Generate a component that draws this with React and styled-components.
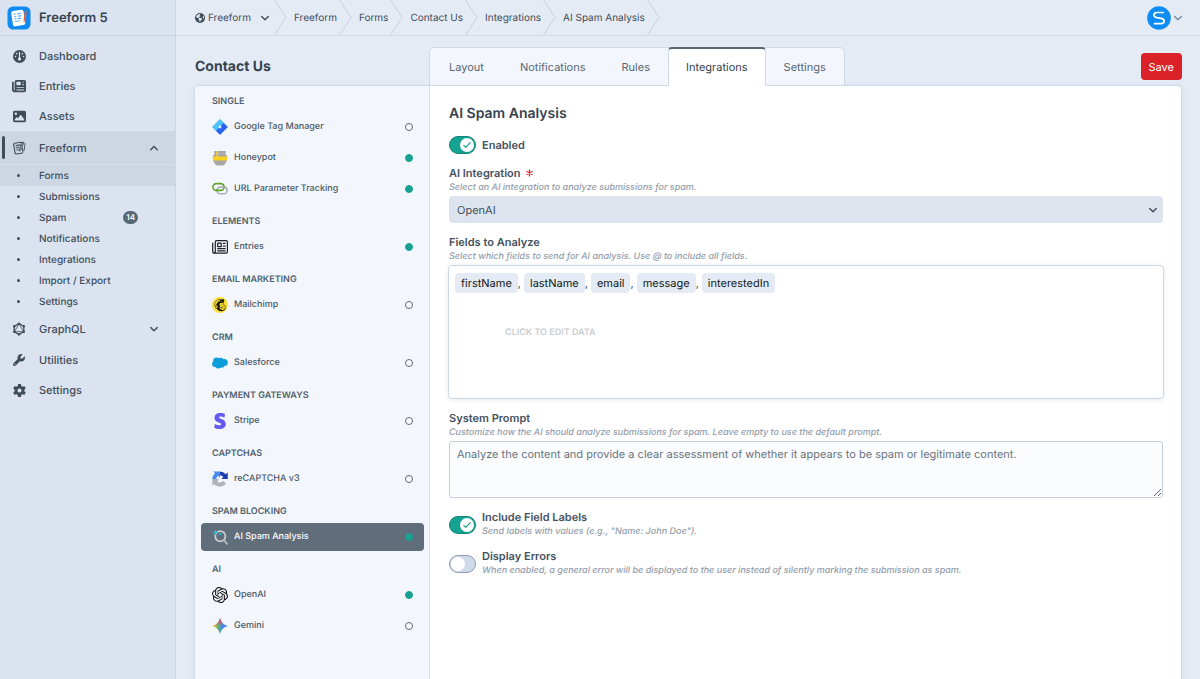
import React from "react";
import styled, { createGlobalStyle, css } from "styled-components";
import { FaGauge, FaNewspaper, FaImage, FaWrench, FaGear, FaEarthAmericas, FaMailchimp } from "react-icons/fa6";
import { SiOpenai, SiStripe } from "react-icons/si";

const GlobalStyle = createGlobalStyle`
  *, *::before, *::after { box-sizing: border-box; }
  body {
    margin: 0;
    background: #e4ebf5;
    color: #3f4d5a;
    font-family: Inter, "Liberation Sans", sans-serif;
    font-size: 11px;
    line-height: 14px;
    text-rendering: geometricPrecision;
  }
  button, input, select, textarea { font: inherit; color: inherit; margin: 0; text-rendering: inherit; }
  a { color: inherit; text-decoration: none; }
  ul, ol { list-style: none; margin: 0; padding: 0; }
  h1, h2, h3, p { margin: 0; }
  svg { display: block; flex: none; }
`;

const Page = styled.div`
  display: flex;
  min-height: 100vh;
`;

/* ---------- global sidebar ---------- */

const Sidebar = styled.aside`
  flex: none;
  width: 176px;
  background: #dae3ef;
  border-right: 1px solid #cbd6e4;
`;

const Brand = styled.a`
  display: flex;
  align-items: center;
  gap: 8px;
  height: 36px;
  padding: 0 7px;
  border-bottom: 1px solid #c9d4e1;
  font-size: 13px;
  font-weight: 600;
  color: #36434f;
`;

const Nav = styled.nav`
  padding-top: 5px;
`;

const NavLink = styled.a`
  position: relative;
  display: flex;
  align-items: center;
  gap: 13px;
  height: ${(p) => (p.$tall ? 33 : 30)}px;
  padding: 0 16px 0 12px;
  font-size: 11px;
  font-weight: 500;
  color: #3f4d5a;
  background: ${(p) => (p.$active ? "#cdd7e3" : "transparent")};
  ${(p) =>
    p.$active &&
    css`
      &::before {
        content: "";
        position: absolute;
        left: 2px;
        top: 5px;
        bottom: 5px;
        width: 3px;
        border-radius: 2px;
        background: #3f4d5a;
      }
    `}
`;

const NavIcon = styled.span`
  display: flex;
  justify-content: center;
  width: 14px;
`;

const NavText = styled.span`
  flex: 1;
`;

const SubNav = styled.ul`
  border-top: 1px solid #d6dfea;
`;

const SubLink = styled.a`
  display: flex;
  align-items: center;
  gap: 13px;
  height: 21px;
  padding: 0 37px 0 12px;
  font-size: 10px;
  font-weight: 500;
  background: ${(p) => (p.$active ? "#cdd7e3" : "transparent")};
  &::before {
    content: "";
    flex: none;
    width: 3px;
    height: 3px;
    margin: 0 6px 0 5px;
    border-radius: 50%;
    background: #3f4d5a;
  }
`;

const Badge = styled.span`
  padding: 0 3px;
  border-radius: 7px;
  background: #596673;
  color: #fff;
  font-size: 8px;
  line-height: 13px;
  font-weight: 600;
`;

/* ---------- top bar ---------- */

const Main = styled.main`
  flex: 1;
  min-width: 0;
  display: flex;
  flex-direction: column;
`;

const TopBar = styled.header`
  display: flex;
  justify-content: space-between;
  height: 36px;
  padding: 0 17px 0 19px;
  border-bottom: 1px solid #d3dce8;
`;

const Crumbs = styled.ol`
  display: flex;
  font-size: 10px;
`;

const Crumb = styled.li`
  display: flex;
  align-items: center;
  gap: 2px;
  & + & { padding-left: 7px; }
`;

const SiteButton = styled.button`
  display: flex;
  align-items: center;
  gap: 3px;
  padding: 0 2px 0 0;
  border: 0;
  background: none;
  svg:last-child { margin-left: 6px; }
`;

const AccountButton = styled.button`
  display: flex;
  align-items: center;
  gap: 2px;
  padding: 0;
  border: 0;
  background: none;
  color: #7d8b9b;
`;

/* ---------- form header ---------- */

const Content = styled.div`
  flex: 1;
  display: flex;
  flex-direction: column;
  padding: 11px 18px 0;
`;

const FormHeader = styled.div`
  display: flex;
  align-items: flex-start;
`;

const FormTitle = styled.h1`
  flex: none;
  width: 235px;
  padding: 2px 0 0 1px;
  font-size: 14px;
  line-height: 36px;
  font-weight: 700;
  color: #36434f;
`;

const Tabs = styled.nav`
  display: flex;
  height: 38px;
  padding-left: 1px;
  border: 1px solid #d0dae6;
  border-bottom: 0;
  border-radius: 5px 5px 0 0;
  background: #f3f7fd;
`;

const Tab = styled.a`
  display: flex;
  align-items: center;
  padding: 0 18px;
  color: #596673;
  ${(p) =>
    p.$active &&
    css`
      margin: -1px 0;
      padding: 0 17px 2px;
      border: 1px solid #d0dae6;
      border-top: 2px solid #596673;
      border-bottom: 0;
      border-radius: 4px 4px 0 0;
      background: #fff;
      color: #36434f;
      z-index: 1;
    `}
`;

const SaveButton = styled.button`
  height: 27px;
  margin: 6px 0 0 auto;
  padding: 0 8px;
  border: 0;
  border-radius: 4px;
  background: #da2127;
  color: #fff;
`;

const Panel = styled.div`
  flex: 1;
  display: flex;
  border: 1px solid #d0dae6;
  border-bottom: 0;
  border-radius: 5px 5px 0 0;
  background: #fff;
  box-shadow: 0 1px 4px rgba(90, 115, 145, 0.12);
`;

/* ---------- integration list ---------- */

const IntegrationList = styled.nav`
  flex: none;
  display: flex;
  flex-direction: column;
  gap: 11px;
  width: 235px;
  padding: 8px 5px 24px 6px;
  border-right: 1px solid #d6dfea;
  border-radius: 5px 0 0 0;
  background: #f3f7fd;
`;

const GroupTitle = styled.h3`
  margin-bottom: 3px;
  padding-left: 11px;
  font-size: 9px;
  line-height: 16px;
  font-weight: 600;
  text-transform: uppercase;
  color: #515f6c;
`;

const GroupItems = styled.ul`
  display: flex;
  flex-direction: column;
  gap: 3px;
`;

const IntegrationLink = styled.a`
  display: flex;
  align-items: center;
  gap: 6px;
  height: 28px;
  padding: 0 11px;
  border-radius: 4px;
  font-size: 9px;
  font-weight: 500;
  color: ${(p) => (p.$active ? "#fff" : "#4b5965")};
  background: ${(p) => (p.$active ? "#606d7b" : "transparent")};
`;

const IntegrationName = styled.span`
  flex: 1;
`;

const Status = styled.span`
  width: 8px;
  height: 8px;
  border-radius: 50%;
  border: 1px solid ${(p) => (p.$on ? "#16a293" : "#5b6875")};
  background: ${(p) => (p.$on ? "#16a293" : "#fff")};
`;

/* ---------- settings form ---------- */

const Form = styled.form`
  flex: 1;
  min-width: 0;
  display: flex;
  flex-direction: column;
  gap: 12px;
  padding: 19px 18px 24px 19px;
`;

const FormHeading = styled.h2`
  margin-bottom: 1px;
  font-size: 14px;
  line-height: 18px;
  font-weight: 600;
  color: #36434f;
`;

const Field = styled.div`
  display: flex;
  flex-direction: column;
`;

const Label = styled.label`
  display: flex;
  align-items: center;
  gap: 5px;
  font-size: 11px;
  line-height: 14px;
  font-weight: 600;
  color: #45525f;
`;

const Hint = styled.p`
  margin-top: 1px;
  font-size: 9px;
  line-height: 14px;
  font-style: italic;
  font-weight: 500;
  color: #929dab;
`;

const SelectWrap = styled.div`
  display: grid;
  align-items: center;
  margin-top: 1px;
  > * { grid-area: 1 / 1; }
  > svg { justify-self: end; margin-right: 5px; pointer-events: none; }
`;

const Select = styled.select`
  appearance: none;
  width: 100%;
  height: 27px;
  padding: 0 8px;
  border: 0;
  border-radius: 4px;
  background: #dee4ed;
`;

const TokenBox = styled.div`
  height: 134px;
  margin: 1px -1px 0;
  padding: 7px 6px;
  border: 1px solid #ccd7e4;
  border-radius: 4px;
  background: #fff;
  box-shadow: 0 1px 5px rgba(90, 115, 145, 0.15);
`;

const Tokens = styled.div`
  display: flex;
  line-height: 20px;
`;

const Token = styled.span`
  padding: 0 6px;
  border-radius: 4px;
  background: #e4ebf5;
  color: #111820;
`;

const Comma = styled.span`
  padding-right: 3px;
`;

const EditButton = styled.button`
  margin: 33px 0 0 50px;
  padding: 0;
  border: 0;
  background: none;
  font-size: 9px;
  font-weight: 600;
  line-height: 14px;
  text-transform: uppercase;
  color: #c9cdd3;
`;

const TextArea = styled.textarea`
  display: block;
  width: 100%;
  height: 57px;
  margin-top: 1px;
  padding: 4px 7px;
  border: 1px solid #c6d0dc;
  border-radius: 3px;
  background: #fbfcfe;
  color: #67737f;
  line-height: 16px;
  resize: vertical;
`;

const ToggleList = styled.div`
  display: flex;
  flex-direction: column;
  gap: 10px;
`;

const ToggleRow = styled.div`
  display: flex;
  align-items: center;
  gap: 6px;
`;

const ToggleWrap = styled.span`
  display: grid;
  align-items: center;
  > * { grid-area: 1 / 1; }
  > svg { justify-self: end; margin-right: 5px; pointer-events: none; }
`;

const ToggleInput = styled.input`
  appearance: none;
  display: flex;
  align-items: center;
  width: 27px;
  height: 18px;
  padding: 0 1px;
  border: 1px solid #8f9fb5;
  border-radius: 9px;
  background: #cfdaea;
  &::before {
    content: "";
    width: 14px;
    height: 14px;
    border-radius: 50%;
    background: #fff;
  }
  &:checked {
    justify-content: flex-end;
    border-color: #128577;
    background: #16a293;
  }
`;

/* ---------- icons ---------- */

const Chevron = ({ up, size = 10 }) => (
  <svg width={size} height={size} viewBox="0 0 10 10" fill="none" stroke="currentColor" strokeWidth="1.4" strokeLinecap="round" strokeLinejoin="round">
    <path d={up ? "M1.7 6.7 5 3.4l3.3 3.3" : "M1.7 3.4 5 6.7l3.3-3.3"} />
  </svg>
);

const CrumbDivider = () => (
  <svg width="13" height="35" viewBox="0 0 13 35" fill="none" stroke="#c5d0de" aria-hidden="true">
    <path d="M.5 0 12 17.5.5 35" />
  </svg>
);

const RequiredMark = () => (
  <svg width="7" height="8" viewBox="0 0 7 8" stroke="#e12d39" strokeWidth="1.3" strokeLinecap="round" role="img" aria-label="Required">
    <path d="M3.5 1v6M.9 2.500l5.200 3M6.100 2.500l-5.200 3" />
  </svg>
);

const FreeformLogo = () => (
  <svg width="24" height="24" viewBox="0 0 24 24">
    <rect width="23" height="23" x=".5" y=".5" rx="5.5" fill="#118af4" />
    <g transform="rotate(-9 12 12)">
      <rect x="5" y="4.2" width="12.5" height="15.5" rx="2.2" fill="#fff" />
      <path d="M7.4 7.6h2M10.8 7.6h4M7.4 10h2M10.8 10h3.6M7.4 12.4h2M10.8 12.4h3.2M7.4 14.8h5" stroke="#5aaef7" strokeWidth="1.1" />
    </g>
    <path d="m18.9 5.2-1.5 9.6" stroke="#e2603f" strokeWidth="2" />
    <path d="m17.3 15-.3 2" stroke="#f5c9a5" strokeWidth="1.4" />
  </svg>
);

const FreeformGlyph = () => (
  <svg width="14" height="14" viewBox="0 0 14 14" fill="none" stroke="currentColor" strokeLinecap="round" strokeLinejoin="round">
    <path d="M10.6 7.5 10.9 11l-1.2 1.3-5.6.7-1-.8L1.6 3.3l.9-1L9 1.3l.8.7" strokeWidth="1.1" />
    <path d="m4 4.6 4.4-.7M4.3 6.8l2.5-.4M4.7 9l1.8-.3" strokeWidth="1.1" />
    <path d="m11.8 1.6-2.5 6.6-1.8 2 .2-2.6 2.2-6z" strokeWidth=".8" fill="currentColor" fillOpacity=".45" />
    <path d="m13 2.5-.9 7" strokeWidth=".9" />
  </svg>
);

const GraphqlIcon = () => (
  <svg width="14" height="14" viewBox="0 0 14 14" fill="none" stroke="currentColor">
    <path d="M7 1.6 11.8 4.3v5.4L7 12.4 2.2 9.7V4.3z" strokeWidth="1.3" />
    <path d="M7 1.8 11.6 9.7H2.4z" strokeWidth=".8" />
    <g fill="currentColor" stroke="none">
      <circle cx="7" cy="1.6" r="1.2" /><circle cx="11.8" cy="4.3" r="1.2" /><circle cx="11.8" cy="9.7" r="1.2" />
      <circle cx="7" cy="12.4" r="1.2" /><circle cx="2.2" cy="9.7" r="1.2" /><circle cx="2.2" cy="4.3" r="1.2" />
    </g>
  </svg>
);

const Avatar = () => (
  <svg width="24" height="24" viewBox="0 0 24 24">
    <circle cx="12" cy="12" r="11.8" fill="#0d8cf5" />
    <path d="M17 6.5H10.2C8 6.5 7 7.5 7 9s1 2.300 3 2.700l4 .7c2.100.4 3.200 1.200 3.200 2.700 0 1.700-1.200 2.600-3.400 2.600H6.800" fill="none" stroke="#fff" strokeWidth="1.7" />
  </svg>
);

const TagManagerIcon = () => (
  <svg width="16" height="16" viewBox="0 0 16 16">
    <path d="M8 .3 15.7 8 8 15.7.3 8z" fill="#2f7df6" />
    <path d="M8 .3 11.8 4.1 4.1 11.8.3 8z" fill="#4fc3f7" />
    <path d="m8 8 3.8-3.9L15.7 8 8 15.7 4.1 11.8z" fill="#2962f0" />
    <path d="m8 6.3 1.7 1.7L8 9.7 6.300 8z" fill="#e8f2fe" />
  </svg>
);

const HoneypotIcon = () => (
  <svg width="16" height="16" viewBox="0 0 16 16">
    <path d="M2.2 1h11.600v2.200H2.200z" fill="#a7a7a7" />
    <path d="M3 3.200h10c1.600 1.400 2.200 2.900 2.200 4.800 0 3.600-1.700 6-4 7.400H4.800c-2.300-1.400-4-3.800-4-7.400 0-1.900.6-3.400 2.200-4.800z" fill="#a7a7a7" />
    <path d="M.9 6.500h14.200c.1.500.1 1 .1 1.600 0 .9-.1 1.700-.3 2.400H1.100C.9 9.800.8 9.100.8 8.100c0-.6 0-1.100.1-1.600z" fill="#f7d21e" />
    <path d="M4.300 1h1.800v6H4.300z" fill="#f7d21e" />
  </svg>
);

const LinkIcon = () => (
  <svg width="16" height="16" viewBox="0 0 16 16" fill="none" strokeWidth="1.6">
    <rect x="5" y="6" width="10.2" height="6.8" rx="3.4" stroke="#a9adb0" />
    <rect x=".9" y="2.6" width="11.2" height="6.8" rx="3.4" stroke="#5ea526" />
    <path d="M9.500 6h2.300a3.400 3.400 0 0 1 3 2" stroke="#a9adb0" />
  </svg>
);

const EntriesIcon = () => (
  <svg width="16" height="16" viewBox="0 0 16 16" fill="none" stroke="#1d2329" strokeWidth="1.2" strokeLinecap="round" strokeLinejoin="round">
    <path d="M3.300 12.200V2.900c0-.7.500-1.200 1.200-1.200h9.700c.7 0 1.200.5 1.200 1.200v9.900c0 .8-.6 1.400-1.400 1.400H2.100c-.8 0-1.400-.6-1.400-1.400V4.200" />
    <path d="M3.300 12.400c0 1-.5 1.700-1.200 1.700" />
    <path d="M5.700 4.200h3.500v3.400H5.700zM11.300 4.400h1.800M11.300 7.200h1.800M5.700 9.700h7.400M5.700 11.900h7.400" />
  </svg>
);

const MailchimpIcon = () => (
  <svg width="16" height="16" viewBox="0 0 16 16">
    <circle cx="8" cy="8" r="8" fill="#fbe13b" />
    <g color="#16150f"><FaMailchimp x="1" y="1" width="14" height="14" size={14} /></g>
  </svg>
);

const SalesforceIcon = () => (
  <svg width="16" height="16" viewBox="0 0 16 16" fill="#0d9dda">
    <circle cx="4.6" cy="5.8" r="3.3" /><circle cx="8.8" cy="5.4" r="2.7" /><circle cx="12.3" cy="7.4" r="3.5" />
    <circle cx="3" cy="9" r="2.9" /><circle cx="6.2" cy="10.4" r="3" /><circle cx="9.7" cy="10" r="2.8" />
  </svg>
);

const RecaptchaIcon = () => (
  <svg width="16" height="16" viewBox="0 0 16 16">
    <path d="M15.800 8V1.200l-2 2A7.800 7.800 0 0 0 7.900.4v4.200c1.600-.1 2.700.6 3.400 1.500L9.300 8z" fill="#1d3fae" />
    <path d="M8 .4H1.200l1.900 1.900A7.800 7.800 0 0 0 .3 8h4.100C4.300 6.600 5 5.500 5.900 4.700L8 6.800z" fill="#4a8af4" />
    <path d="M.3 8v6.800l1.900-1.900c3 3.700 8.900 3.500 11.900-.5l-3.100-2.600c-1.500 2.100-3.900 2.100-5.500.4L7 8z" fill="#b0b3b8" />
  </svg>
);

const SpamAnalysisIcon = () => (
  <svg width="16" height="16" viewBox="0 0 16 16" fill="none">
    <circle cx="8.3" cy="7.2" r="5.1" stroke="#c9ccd0" strokeWidth="1.8" />
    <path d="m12.1 11.3 3 3.5" stroke="#b4b8bc" strokeWidth="1.9" strokeLinecap="round" />
    <path d="m3.5.6.9 2.100 2.100.9-2.100.9-.9 2.100-.9-2.100-2.100-.9 2.100-.9z" fill="#24c1de" />
    <path d="m8.300 3.600.5 1.100 1.100.5-1.100.5-.5 1.100-.5-1.100-1.100-.5 1.100-.5z" fill="#24c1de" />
  </svg>
);

const GeminiIcon = () => (
  <svg width="16" height="16" viewBox="0 0 16 16">
    <defs>
      <linearGradient id="geminiBase" x1="0" x2="1" y1="0" y2="0">
        <stop offset=".1" stopColor="#f6c12c" />
        <stop offset=".42" stopColor="#5cae7d" />
        <stop offset=".65" stopColor="#3f86f5" />
      </linearGradient>
      <linearGradient id="geminiTop" x1="0" x2="0" y1="0" y2="1">
        <stop offset=".12" stopColor="#ee4d5f" />
        <stop offset=".5" stopColor="#ee4d5f" stopOpacity="0" />
      </linearGradient>
    </defs>
    <path d="M8 0c1.100 4.400 3.600 6.900 8 8-4.400 1.100-6.900 3.600-8 8-1.100-4.400-3.600-6.900-8-8 4.400-1.100 6.900-3.600 8-8z" fill="url(#geminiBase)" />
    <path d="M8 0c1.100 4.400 3.600 6.900 8 8-4.400 1.100-6.900 3.600-8 8-1.100-4.400-3.600-6.900-8-8 4.400-1.100 6.900-3.600 8-8z" fill="url(#geminiTop)" />
  </svg>
);

const CheckMark = () => (
  <svg width="8" height="8" viewBox="0 0 8 8" fill="none" stroke="#16a293" strokeWidth="1.2" strokeLinecap="round" strokeLinejoin="round">
    <path d="m.8 4.400 2 2L7.200 1.700" />
  </svg>
);

/* ---------- data ---------- */

const subPages = [
  { name: "Forms", active: true },
  { name: "Submissions" },
  { name: "Spam", count: 14 },
  { name: "Notifications" },
  { name: "Integrations" },
  { name: "Import / Export" },
  { name: "Settings" },
];

const crumbs = ["Freeform", "Forms", "Contact Us", "Integrations", "AI Spam Analysis"];
const tabs = ["Layout", "Notifications", "Rules", "Integrations", "Settings"];
const tokens = ["firstName", "lastName", "email", "message", "interestedIn"];

const groups = [
  {
    title: "Single",
    items: [
      { name: "Google Tag Manager", icon: <TagManagerIcon /> },
      { name: "Honeypot", icon: <HoneypotIcon />, on: true },
      { name: "URL Parameter Tracking", icon: <LinkIcon />, on: true },
    ],
  },
  { title: "Elements", items: [{ name: "Entries", icon: <EntriesIcon />, on: true }] },
  { title: "Email Marketing", items: [{ name: "Mailchimp", icon: <MailchimpIcon /> }] },
  { title: "CRM", items: [{ name: "Salesforce", icon: <SalesforceIcon /> }] },
  { title: "Payment Gateways", items: [{ name: "Stripe", icon: <SiStripe size={16} color="#635bef" /> }] },
  { title: "Captchas", items: [{ name: "reCAPTCHA v3", icon: <RecaptchaIcon /> }] },
  { title: "Spam Blocking", items: [{ name: "AI Spam Analysis", icon: <SpamAnalysisIcon />, on: true, active: true }] },
  {
    title: "AI",
    items: [
      { name: "OpenAI", icon: <SiOpenai size={16} color="#111" />, on: true },
      { name: "Gemini", icon: <GeminiIcon /> },
    ],
  },
];

function NavItem({ icon, children, after, ...rest }) {
  return (
    <NavLink href="#" {...rest}>
      <NavIcon>{icon}</NavIcon>
      <NavText>{children}</NavText>
      {after}
    </NavLink>
  );
}

function Toggle({ id, on }) {
  const [checked, setChecked] = React.useState(Boolean(on));
  return (
    <ToggleWrap>
      <ToggleInput id={id} type="checkbox" role="switch" checked={checked} onChange={(e) => setChecked(e.target.checked)} />
      {checked && <CheckMark />}
    </ToggleWrap>
  );
}

export default function App() {
  return (
    <>
      <GlobalStyle />
      <Page>
        <Sidebar>
          <Brand href="#"><FreeformLogo />Freeform 5</Brand>
          <Nav aria-label="Main">
            <NavItem icon={<FaGauge size={13} />}>Dashboard</NavItem>
            <NavItem icon={<FaNewspaper size={14} />}>Entries</NavItem>
            <NavItem icon={<FaImage size={13} />}>Assets</NavItem>
            <NavItem icon={<FreeformGlyph />} after={<Chevron up />} $tall $active>Freeform</NavItem>
            <SubNav>
              {subPages.map((page) => (
                <li key={page.name}>
                  <SubLink href="#" $active={page.active}>
                    <NavText>{page.name}</NavText>
                    {page.count && <Badge>{page.count}</Badge>}
                  </SubLink>
                </li>
              ))}
            </SubNav>
            <NavItem icon={<GraphqlIcon />} after={<Chevron />} $tall>GraphQL</NavItem>
            <NavItem icon={<FaWrench size={12} />}>Utilities</NavItem>
            <NavItem icon={<FaGear size={13} />}>Settings</NavItem>
          </Nav>
        </Sidebar>

        <Main>
          <TopBar>
            <Crumbs>
              <Crumb>
                <SiteButton type="button"><FaEarthAmericas size={10} />Freeform<Chevron /></SiteButton>
                <CrumbDivider />
              </Crumb>
              {crumbs.map((name) => (
                <Crumb key={name}><a href="#">{name}</a><CrumbDivider /></Crumb>
              ))}
            </Crumbs>
            <AccountButton type="button" aria-label="Account"><Avatar /><Chevron /></AccountButton>
          </TopBar>

          <Content>
            <FormHeader>
              <FormTitle>Contact Us</FormTitle>
              <Tabs aria-label="Form sections">
                {tabs.map((name) => (
                  <Tab key={name} href="#" $active={name === "Integrations"}>{name}</Tab>
                ))}
              </Tabs>
              <SaveButton type="button">Save</SaveButton>
            </FormHeader>

            <Panel>
              <IntegrationList aria-label="Integrations">
                {groups.map((group) => (
                  <section key={group.title}>
                    <GroupTitle>{group.title}</GroupTitle>
                    <GroupItems>
                      {group.items.map((item) => (
                        <li key={item.name}>
                          <IntegrationLink href="#" $active={item.active}>
                            {item.icon}
                            <IntegrationName>{item.name}</IntegrationName>
                            <Status $on={item.on} />
                          </IntegrationLink>
                        </li>
                      ))}
                    </GroupItems>
                  </section>
                ))}
              </IntegrationList>

              <Form>
                <FormHeading>AI Spam Analysis</FormHeading>
                <ToggleRow>
                  <Toggle id="enabled" on />
                  <Label htmlFor="enabled">Enabled</Label>
                </ToggleRow>
                <Field>
                  <Label htmlFor="integration">AI Integration<RequiredMark /></Label>
                  <Hint>Select an AI integration to analyze submissions for spam.</Hint>
                  <SelectWrap>
                    <Select id="integration" defaultValue="OpenAI"><option>OpenAI</option></Select>
                    <Chevron />
                  </SelectWrap>
                </Field>
                <Field>
                  <Label as="span">Fields to Analyze</Label>
                  <Hint>Select which fields to send for AI analysis. Use @ to include all fields.</Hint>
                  <TokenBox>
                    <Tokens>
                      {tokens.map((name, i) => (
                        <React.Fragment key={name}>
                          {i > 0 && <Comma>,</Comma>}
                          <Token>{name}</Token>
                        </React.Fragment>
                      ))}
                    </Tokens>
                    <EditButton type="button">Click to edit data</EditButton>
                  </TokenBox>
                </Field>
                <Field>
                  <Label htmlFor="prompt">System Prompt</Label>
                  <Hint>Customize how the AI should analyze submissions for spam. Leave empty to use the default prompt.</Hint>
                  <TextArea id="prompt" defaultValue="Analyze the content and provide a clear assessment of whether it appears to be spam or legitimate content." />
                </Field>
                <ToggleList>
                  <ToggleRow>
                    <Toggle id="labels" on />
                    <Field>
                      <Label htmlFor="labels">Include Field Labels</Label>
                      <Hint>Send labels with values (e.g., "Name: John Doe").</Hint>
                    </Field>
                  </ToggleRow>
                  <ToggleRow>
                    <Toggle id="errors" />
                    <Field>
                      <Label htmlFor="errors">Display Errors</Label>
                      <Hint>When enabled, a general error will be displayed to the user instead of silently marking the submission as spam.</Hint>
                    </Field>
                  </ToggleRow>
                </ToggleList>
              </Form>
            </Panel>
          </Content>
        </Main>
      </Page>
    </>
  );
}
